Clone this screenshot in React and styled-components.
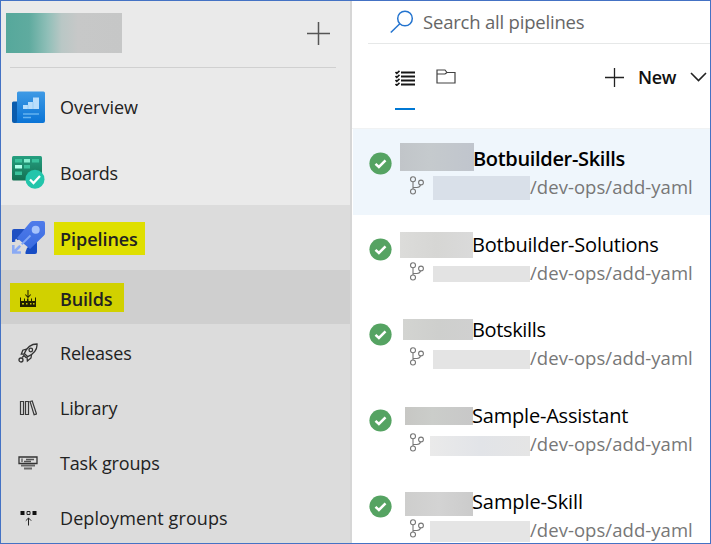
import React from "react";
import styled, { createGlobalStyle } from "styled-components";

const GlobalStyle = createGlobalStyle`
  * { box-sizing: border-box; }
  body { margin: 0; font-family: "Open Sans", "Noto Sans", sans-serif; background: #fff; }
  svg { display: block; flex: none; }
`;

const Page = styled.div`
  width: 711px;
  height: 544px;
  border: 1px solid #4472c4;
  display: grid;
  grid-template-columns: 351px 1fr;
  overflow: hidden;
`;

const Sidebar = styled.nav`
  background: #eaeaea;
  border-right: 2px solid #d6d6d6;
  overflow: hidden;
`;

const SidebarHeader = styled.div`
  height: 67px;
  margin: 0 14px 6px 9px;
  border-bottom: 1px solid #d0d0d0;
  display: flex;
  justify-content: space-between;
  align-items: flex-start;
  padding: 12px 6px 0 0;
`;

const ProjectMask = styled.div`
  width: 116px;
  height: 40px;
  margin-left: -4px;
  background: linear-gradient(90deg, #56a89b 0%, #5fab9f 20%, #90bfb8 36%, #b9c7c5 48%, #c7c8c8 62%, #c6c7c7 100%);
`;

const PlusSlot = styled.div`
  padding-top: 9px;
`;

const NavItem = styled.div`
  height: ${(p) => p.$h}px;
  display: grid;
  grid-template-columns: 59px 1fr;
  align-items: center;
  background: ${(p) => p.$bg || "transparent"};
`;

const SubNav = styled.div`
  background: #dcdcdc;
  height: 340px;
`;

const NavIcon = styled.span`
  padding-left: ${(p) => p.$left}px;
`;

const Label = styled.span`
  font-size: 18px;
  line-height: 32px;
  white-space: nowrap;
  color: #222;
  font-weight: ${(p) => (p.$bold ? 600 : 400)};
  letter-spacing: ${(p) => p.$ls || 0}px;
`;

const Highlight = styled.span`
  display: inline-flex;
  align-items: center;
  justify-self: start;
  height: 33px;
  width: 91px;
  margin-left: -6px;
  margin-top: 2px;
  padding-left: 6px;
  background: #dfdf00;
`;

const BuildHighlight = styled.div`
  grid-column: 1 / -1;
  display: grid;
  grid-template-columns: 50px 1fr;
  align-items: center;
  width: 114px;
  height: 29px;
  margin-left: 9px;
  background: #d1d100;
`;

const Main = styled.main`
  background: #fff;
  min-width: 0;
`;

const Search = styled.div`
  height: 43px;
  margin-left: 16px;
  padding-left: 22px;
  border-bottom: 1px solid #e6e8e8;
  display: flex;
  align-items: center;
  gap: 9px;
`;

const SearchText = styled.span`
  font-size: 18.5px;
  line-height: 30px;
  color: #666;
  letter-spacing: -0.2px;
  white-space: nowrap;
`;

const Toolbar = styled.div`
  height: 85px;
  display: flex;
  align-items: flex-start;
  border-bottom: 1px solid #f0f2f3;
  padding-left: 43px;
`;

const Tab = styled.div`
  width: 20px;
  height: 66px;
  margin-right: 21px;
  padding-top: ${(p) => p.$top}px;
  border-bottom: 2px solid ${(p) => (p.$active ? "#0078d4" : "transparent")};
`;

const NewButton = styled.div`
  margin-left: 128px;
  padding-top: 17px;
  display: flex;
  align-items: center;
  gap: 14px;
  white-space: nowrap;
`;

const NewText = styled.span`
  width: 38px;
  font-size: 18px;
  font-weight: 600;
  line-height: 32px;
  color: #111;
  letter-spacing: -0.3px;
`;

const Row = styled.div`
  height: ${(p) => p.$h}px;
  margin-left: 1px;
  display: grid;
  grid-template-columns: 47px 1fr;
  padding-top: 14px;
  background: ${(p) => (p.$selected ? "#eff6fc" : "#fff")};
`;

const Status = styled.div`
  padding: 9px 0 0 16px;
`;

const Line = styled.div`
  height: ${(p) => p.$h}px;
  display: flex;
  align-items: flex-start;
`;

const Mask = styled.span`
  flex: none;
  width: ${(p) => p.$w}px;
  height: ${(p) => p.$h}px;
  margin: ${(p) => p.$top}px 0 0 ${(p) => p.$left}px;
  background: ${(p) => p.$bg};
`;

const Title = styled.span`
  font-size: 20px;
  line-height: 31px;
  color: #000;
  white-space: nowrap;
  margin-left: -1px;
  font-weight: ${(p) => (p.$bold ? 600 : 400)};
  letter-spacing: ${(p) => p.$ls}px;
`;

const Branch = styled.span`
  font-size: 18.5px;
  line-height: 26px;
  color: #777;
  white-space: nowrap;
  letter-spacing: 0.05px;
`;

const BranchIconSlot = styled.span`
  width: 15px;
  margin-left: 9px;
  padding-top: 2px;
`;

const PlusIcon = ({ size, color, w }) => (
  <svg width={size} height={size} viewBox={`0 0 ${size} ${size}`} stroke={color} strokeWidth={w} fill="none">
    <path d={`M0 ${size / 2}H${size}M${size / 2} 0V${size}`} />
  </svg>
);

const OverviewIcon = () => (
  <svg width="33" height="33" viewBox="0 0 33 33">
    <defs>
      <linearGradient id="ov" x1="0" y1="0" x2="0" y2="1">
        <stop offset="0" stopColor="#3f9ae5" />
        <stop offset="1" stopColor="#0a74d6" />
      </linearGradient>
    </defs>
    <path d="M0 12q0-1.500 1.500-1.500H7V32H2q-2 0-2-2z" fill="#0b5cad" />
    <path d="M5 2q0-1.500 1.500-1.500h25Q33 .5 33 2v28q0 2-2 2H3q2 0 2-2z" fill="url(#ov)" />
    <path d="M11 18v-4h5v-3h5V6.500h6V18z" fill="#b9defb" />
    <path d="M16 18v-4M21 18v-7" stroke="#8cc8f5" strokeWidth=".7" />
    <path d="M11 23h16M11 26.500h8" stroke="#64b2f0" strokeWidth="1.500" />
  </svg>
);

const BoardsIcon = () => (
  <svg width="33" height="33" viewBox="0 0 33 33">
    <defs>
      <linearGradient id="bd" x1="0" y1="0" x2="0" y2="1">
        <stop offset="0" stopColor="#269f80" />
        <stop offset="1" stopColor="#127052" />
      </linearGradient>
    </defs>
    <rect x="0" y="0" width="30" height="24.500" rx="1.500" fill="url(#bd)" />
    <path d="M3 3h7v3.500H3zM20 3h7v3.500h-7zM12 9h6v3.500h-6zM3 15.500h7V19H3z" fill="#39c19b" />
    <path d="M12 3h6v3.500h-6z" fill="#86efcf" />
    <path d="M3 9h7v3.500H3z" fill="#b2ffec" />
    <circle cx="23" cy="23.300" r="9.500" fill="#23c5ab" />
    <path d="m18 23.500 3.500 3.500L28 20" fill="none" stroke="#fff" strokeWidth="2.300" />
  </svg>
);

const PipelinesIcon = () => (
  <svg width="33" height="33" viewBox="0 0 33 33">
    <defs>
      <linearGradient id="pl" x1="0" y1="0" x2="0" y2="1">
        <stop offset="0" stopColor="#507bea" />
        <stop offset="1" stopColor="#386be0" />
      </linearGradient>
    </defs>
    <path d="M0 10q0-2 2-2h12L8 18l-6 3H0z" fill="#1f50c2" />
    <path d="M25 18v13q0 2-2 2h-9q-1 0-.5-2l1.500-4z" fill="#164cc4" />
    <path d="M20.500 0H31q2 0 2 2v10q0 1.500-1 2.500L18 28 5 17 18 1.500q1-1.500 2.500-1.500z" fill="url(#pl)" />
    <circle cx="23.700" cy="8.800" r="4" fill="#a7c3fb" />
    <path d="m7 26 11.500-11.500" stroke="#82a7f5" strokeWidth="1.800" />
    <path d="m3.500 18.500 10 10" stroke="#dcdcdc" strokeWidth="2" />
    <path d="M1.300 24v7.500H9M1.500 31.500l6-6" fill="none" stroke="#8aaaf4" strokeWidth="2.600" />
  </svg>
);

const BuildsIcon = () => (
  <svg width="18" height="18" viewBox="0 0 18 18">
    <path d="M9 0v7M6.300 4.500 9 7.500l2.700-3" fill="none" stroke="#262600" strokeWidth="1.100" />
    <path d="M1 7.500h1V11h3V8.500h1V11h2V8.500h1.500V11H12V8.500h1V11h3V7.500h1V17H1z" fill="#202000" />
    <path d="M3 13h2v1.500H3zM7 13h1.500v1.500H7zM11 13h1.500v1.500H11zM14 13h1.500v1.500H14z" fill="#c8c800" />
  </svg>
);

const ReleasesIcon = () => (
  <svg width="20" height="20" viewBox="0 0 20 20" fill="none" stroke="#333" strokeWidth="1.300">
    <path d="M19 1C13 1 9 4 6.300 10.500l3.500 3.200C15 11 19.500 7 19 1z" />
    <circle cx="12.800" cy="7" r="1.800" />
    <path d="m8.500 6.200-3.700 1-1.500 4h3M13.600 11l-.6 4-3.600 3-.5-4.500M5.500 12l2.700 2.700" />
    <circle cx="3" cy="17" r="2" />
    <path d="m4.200 14.500 1.700-1.700" />
  </svg>
);

const LibraryIcon = () => (
  <svg width="18" height="16" viewBox="0 0 18 16" fill="none" stroke="#393939" strokeWidth="1.200">
    <path d="M1.500 1.500h3v13h-3zM6.500 1.500h3v13h-3zM11 1.500l2.200-.5 4.300 13-2.400.7z" />
  </svg>
);

const TaskIcon = () => (
  <svg width="20" height="14" viewBox="0 0 20 14" fill="none" stroke="#333" strokeWidth="1.300">
    <path d="M1 1h18v6.500H1z" />
    <path d="M4 2.500v3.500M8 3.500h8M6 5.500h7" stroke="#555" />
    <path d="M3 9.500h14M6 12.500h8" strokeWidth="1.900" stroke="#666" />
  </svg>
);

const DeployIcon = () => (
  <svg width="17" height="17" viewBox="0 0 17 17" fill="none" stroke="#222" strokeWidth="1">
    <path d="M.5 1h4v4h-4zM12.500 1h4v4h-4z" fill="#111" stroke="none" />
    <path d="M7 1.500h3v3H7zM8.500 15.500V8M5.800 10.700 8.500 8l2.700 2.700" />
  </svg>
);

const SearchIcon = () => (
  <svg width="24" height="24" viewBox="0 0 24 24" fill="none" stroke="#2474cf" strokeWidth="1.500">
    <circle cx="15" cy="8.500" r="7.300" />
    <path d="M9.800 13.700.8 22.500" />
  </svg>
);

const ListIcon = () => (
  <svg width="20" height="16" viewBox="0 0 20 16" fill="none" stroke="#161616">
    <path d="M6 2.500H20M6 6.500H20M6 10.500H20M6 14.500H20" strokeWidth="2" />
    <path d="m.5 2 1.300 1.300L4.500.8M.5 6l1.300 1.300 2.700-2.500M.5 10l1.300 1.300 2.700-2.500M.5 14l1.300 1.300 2.700-2.500" strokeWidth="1.600" />
  </svg>
);

const FolderIcon = () => (
  <svg width="20" height="15" viewBox="0 0 20 15" fill="none" stroke="#424242" strokeWidth="1.200">
    <path d="M1 1h8l2 2.500h8V14H1zM1 5h8l2-1.500" />
  </svg>
);

const ChevronIcon = () => (
  <svg width="17" height="10" viewBox="0 0 17 10" fill="none" stroke="#222" strokeWidth="1.600">
    <path d="m1 1 7.500 7.500L16 1" />
  </svg>
);

const CheckIcon = () => (
  <svg width="23" height="23" viewBox="0 0 23 23" fill="none">
    <circle cx="11.500" cy="11.500" r="11.100" fill="#55a362" />
    <path d="m6.500 11.800 3.400 3.200 6.600-6.600" stroke="#fff" strokeWidth="2.500" />
  </svg>
);

const BranchIcon = () => (
  <svg width="15" height="19" viewBox="0 0 15 19" fill="none" stroke="#777" strokeWidth="1.100">
    <circle cx="4" cy="3.300" r="2.500" />
    <circle cx="4" cy="15.500" r="2.500" />
    <circle cx="12" cy="6.500" r="2.400" />
    <path d="M4 5.800V13M4 11.500h4q3 0 3.500-2.600" />
  </svg>
);

const subItems = [
  { label: "Releases", icon: <ReleasesIcon />, left: 17, h: 58, ls: -0.2 },
  { label: "Library", icon: <LibraryIcon />, left: 18, h: 52, ls: -0.2 },
  { label: "Task groups", icon: <TaskIcon />, left: 17, h: 58, ls: -0.15 },
  { label: "Deployment groups", icon: <DeployIcon />, left: 19, h: 52, ls: 0.1 },
];

const rows = [
  { name: "Botbuilder-Skills", h: 86, ls: -0.33, selected: true,
    mask: { $w: 74, $h: 28, $top: 0, $left: 0, $bg: "linear-gradient(90deg,#c1c5c9,#c5cacd 40%,#c0c5cd)" },
    sub: { $w: 97, $h: 24, $top: 2, $left: 9, $bg: "#d9e0e9" } },
  { name: "Botbuilder-Solutions", h: 85, ls: -0.22,
    mask: { $w: 73, $h: 26, $top: 3, $left: 0, $bg: "linear-gradient(90deg,#dcdcda,#d6d6d4 50%,#dadada)" },
    sub: { $w: 97, $h: 16, $top: 6, $left: 9, $bg: "#e3e3e3" } },
  { name: "Botskills", h: 86, ls: -0.35,
    mask: { $w: 70, $h: 21, $top: 5, $left: 3, $bg: "linear-gradient(90deg,#d3d4d1,#cecfcd 50%,#d0d0d0)" },
    sub: { $w: 97, $h: 19, $top: 5, $left: 9, $bg: "#e4e4e4" } },
  { name: "Sample-Assistant", h: 86, ls: -0.2,
    mask: { $w: 68, $h: 18, $top: 7, $left: 5, $bg: "linear-gradient(90deg,#c7c7c4,#cbcdca 40%,#c8c8c8)" },
    sub: { $w: 100, $h: 20, $top: 5, $left: 6, $bg: "linear-gradient(90deg,#eaeaea,#e2e4e8 50%,#e5e5e5)" } },
  { name: "Sample-Skill", h: 86, ls: -0.1,
    mask: { $w: 68, $h: 24, $top: 6, $left: 5, $bg: "linear-gradient(90deg,#cececd,#d3d3d3 50%,#cbcbcb)" },
    sub: { $w: 100, $h: 21, $top: 4, $left: 6, $bg: "#e5e5e5" } },
];

export default function App() {
  return (
    <>
      <GlobalStyle />
      <Page>
        <Sidebar>
          <SidebarHeader>
            <ProjectMask />
            <PlusSlot><PlusIcon size={23} color="#555" w={1.5} /></PlusSlot>
          </SidebarHeader>
          <NavItem $h={66}>
            <NavIcon $left={11}><OverviewIcon /></NavIcon>
            <Label>Overview</Label>
          </NavItem>
          <NavItem $h={65}>
            <NavIcon $left={11}><BoardsIcon /></NavIcon>
            <Label $ls={-0.25}>Boards</Label>
          </NavItem>
          <SubNav>
            <NavItem $h={65}>
              <NavIcon $left={11}><PipelinesIcon /></NavIcon>
              <Highlight><Label $bold $ls={-0.05}>Pipelines</Label></Highlight>
            </NavItem>
            <NavItem $h={54} $bg="#cfcfcf">
              <BuildHighlight>
                <NavIcon $left={9}><BuildsIcon /></NavIcon>
                <Label $bold $ls={-0.15}>Builds</Label>
              </BuildHighlight>
            </NavItem>
            {subItems.map((i) => (
              <NavItem key={i.label} $h={i.h}>
                <NavIcon $left={i.left}>{i.icon}</NavIcon>
                <Label $ls={i.ls}>{i.label}</Label>
              </NavItem>
            ))}
          </SubNav>
        </Sidebar>
        <Main>
          <Search>
            <SearchIcon />
            <SearchText>Search all pipelines</SearchText>
          </Search>
          <Toolbar>
            <Tab $active $top={26}><ListIcon /></Tab>
            <Tab $top={25}><FolderIcon /></Tab>
            <NewButton>
              <PlusIcon size={19} color="#222" w={1.3} />
              <NewText>New</NewText>
              <ChevronIcon />
            </NewButton>
          </Toolbar>
          {rows.map((r) => (
            <Row key={r.name} $h={r.h} $selected={r.selected}>
              <Status><CheckIcon /></Status>
              <div>
                <Line $h={31}>
                  <Mask {...r.mask} />
                  <Title $bold={r.selected} $ls={r.ls}>{r.name}</Title>
                </Line>
                <Line $h={28}>
                  <BranchIconSlot><BranchIcon /></BranchIconSlot>
                  <Mask {...r.sub} />
                  <Branch>/dev-ops/add-yaml</Branch>
                </Line>
              </div>
            </Row>
          ))}
        </Main>
      </Page>
    </>
  );
}
